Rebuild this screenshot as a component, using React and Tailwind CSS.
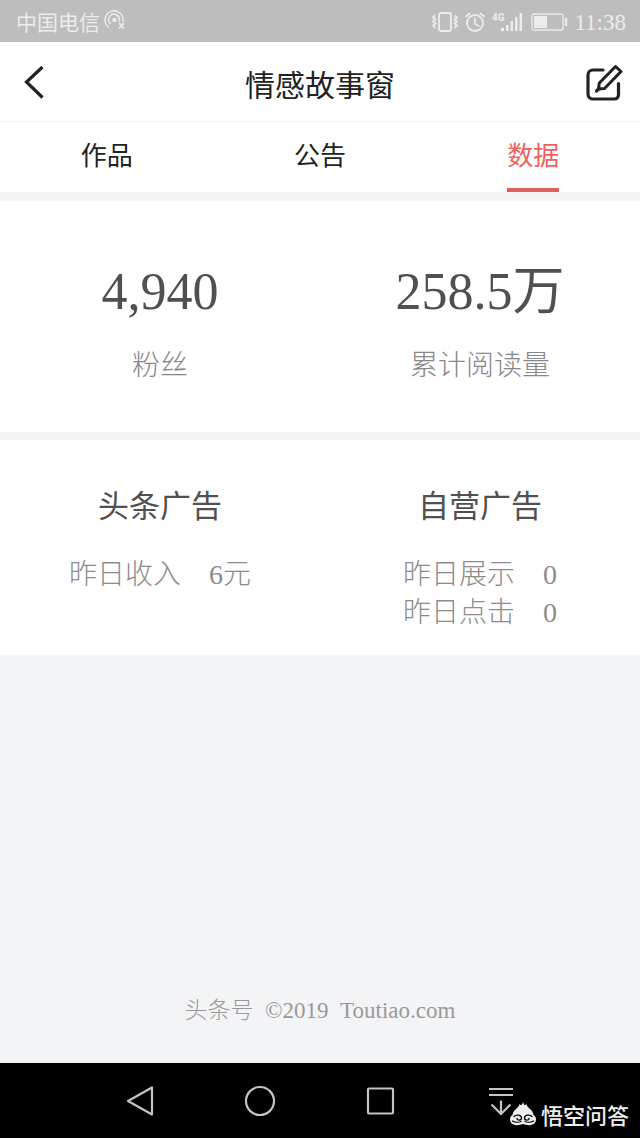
import React, { useState } from 'react';

const tabs = ['作品', '公告', '数据'];

const stats = [
  { value: '4,940', label: '粉丝' },
  { value: '258.5万', label: '累计阅读量' },
];

const ads = [
  { title: '头条广告', rows: [{ label: '昨日收入', value: '6元' }] },
  {
    title: '自营广告',
    rows: [
      { label: '昨日展示', value: '0' },
      { label: '昨日点击', value: '0' },
    ],
  },
];

const StatusBar = () => (
  <div className="flex h-[42px] items-center justify-between bg-[#bdbdbd] pt-[2px] pr-[14px] pl-4 text-[#ececec]">
    <div className="flex items-center gap-1">
      <span className="pt-[2px] text-[21px] leading-6">中国电信</span>
      {/* Hotspot */}
      <svg className="-mt-1 h-5 w-[22px]" viewBox="0 0 22 20" fill="none" stroke="currentColor" strokeWidth="1.5" strokeLinecap="round">
        <path d="M4.500 17A9 9 0 1 1 19 11M6.500 13.500a5.300 5.300 0 1 1 8.600-2.500" />
        <circle cx="10.500" cy="10" r="2.200" fill="currentColor" stroke="none" />
        <path d="m15.500 13.500 4 4.500m0-4.500-4 4.500" strokeWidth="1.800" />
      </svg>
    </div>
    <div className="flex items-center">
      {/* Vibrate */}
      <svg className="h-5 w-[26px]" viewBox="0 0 26 20" fill="none" stroke="currentColor" strokeWidth="1.800">
        <rect x="7" y="1" width="12" height="18" rx="2" />
        <path d="m3 3.500-2 2 2.500 2-2.500 2 2.500 2-2.500 2 2.500 2.500M23 3.500l2 2-2.500 2 2.500 2-2.500 2 2.500 2-2.500 2.500" />
      </svg>
      {/* Alarm */}
      <svg className="ml-[7px] h-5 w-5" viewBox="0 0 20 20" fill="none" stroke="currentColor" strokeWidth="1.800" strokeLinecap="round">
        <circle cx="10" cy="11" r="8" />
        <path d="M10 6.500v5l3.500 2.500M1 4.500 4.500 1.500M19 4.500 15.500 1.500" />
      </svg>
      <div className="ml-[7px] flex items-end">
        <span className="mb-[9px] font-['Roboto',sans-serif] text-[10px] leading-[11px] font-bold">4G</span>
        <svg className="-ml-[3px] h-5 w-[22px]" viewBox="0 0 22 20" fill="currentColor">
          <path d="M0 16h3v3H0zM5 13h2.500v6H5zM9.500 9H12v10H9.500zM14 5h2.500v14H14zM18.500 1H21v18h-2.500z" />
        </svg>
      </div>
      {/* Battery */}
      <svg className="ml-[8px] h-[18px] w-[37px]" viewBox="0 0 37 18" fill="none" stroke="currentColor">
        <rect x="1" y="1" width="31" height="16" rx="2" strokeWidth="1.300" />
        <path d="M3 3h13v12H3z" fill="currentColor" stroke="none" />
        <path d="M35 5v8" strokeWidth="2.500" />
      </svg>
      <span className="ml-[6px] pt-[2px] text-[23px] leading-6">11:38</span>
    </div>
  </div>
);

const Header = () => (
  <header className="flex h-20 items-center justify-between border-b border-[#f1f2f3] px-[17px] text-[#222]">
    <button type="button" aria-label="返回" className="flex w-10 pl-[7px]">
      <svg className="h-[34px] w-5" viewBox="0 0 20 34" fill="none" stroke="currentColor" strokeWidth="3.200">
        <path d="M18.500 2 2.500 17l16 15.500" />
      </svg>
    </button>
    <h1 className="pt-2 text-[30px] leading-9">情感故事窗</h1>
    <button type="button" aria-label="编辑" className="flex w-10 justify-end">
      <svg className="h-[38px] w-[37px]" viewBox="0 0 37 38" fill="none" stroke="currentColor" strokeWidth="3.200" strokeLinecap="round" strokeLinejoin="round">
        <path d="M17 7H7a5 5 0 0 0-5 5v19a5 5 0 0 0 5 5h21.500a4 4 0 0 0 4-4V20.500" />
        <path d="M29.500 3.500 35 8.500 18.500 25.500l-6 .5.800-6z" strokeWidth="3" />
        <path d="m13 25.500-2.500 2.500" />
      </svg>
    </button>
  </header>
);

const NavBar = () => (
  <nav className="relative flex h-[75px] items-center justify-between bg-black px-[19%] text-[#c4c4c4]">
    <button type="button" aria-label="后退">
      <svg className="h-9 w-9" viewBox="0 0 36 36" fill="none" stroke="currentColor" strokeWidth="2.200" strokeLinejoin="round">
        <path d="M30 4.500v27L6 18z" />
      </svg>
    </button>
    <button type="button" aria-label="主页">
      <svg className="h-9 w-9" viewBox="0 0 36 36" fill="none" stroke="currentColor" strokeWidth="2.200">
        <circle cx="18" cy="18" r="14" />
      </svg>
    </button>
    <button type="button" aria-label="最近任务">
      <svg className="h-9 w-9" viewBox="0 0 36 36" fill="none" stroke="currentColor" strokeWidth="2.200">
        <rect x="6" y="5.500" width="25" height="25" rx="1" />
      </svg>
    </button>
    <button type="button" aria-label="通知栏">
      <svg className="h-9 w-9" viewBox="0 0 36 36" fill="none" stroke="currentColor" strokeWidth="2.200">
        <path d="M7 6h24M7 12h24M19 17.500V31M9.500 21.500 19 31l9.500-9.500" />
      </svg>
    </button>

    <div className="absolute right-[11px] bottom-3 flex items-center gap-[5px] text-[#eee]">
      <svg className="h-6 w-[26px]" viewBox="0 0 26 24">
        <path
          fill="currentColor"
          d="M13 0c.3 1.500 1 2.500 2 3.300l1.500-1.300c.3 2 1.500 3 3 4.500 2.300 2 3.800 3.800 4 6.500 1.600.8 2.500 2.500 2.500 4.500 0 3-2 5-5 5.500-2.500.5-5 0-8-1-3 1-5.500 1.500-8 1-3-.5-5-2.500-5-5.500 0-2 .9-3.700 2.500-4.500.2-2.700 1.700-4.500 4-6.500 1.500-1.500 2.700-2.500 3-4.500L11 3.300c1-.8 1.700-1.800 2-3.300z"
        />
        <path
          d="M4 14.500c2.500-2.500 7.500-1.500 7.500 1.500 0 2.800-4.500 2.800-4.500.5M22 14.500c-2.500-2.500-7.500-1.500-7.500 1.500 0 2.800 4.500 2.800 4.500.5M2.500 19c2.500 1.500 6.500 1.500 8.500.5M23.500 19c-2.500 1.500-6.500 1.500-8.500.5"
          fill="none"
          stroke="#000"
          strokeWidth="1.300"
          strokeLinecap="round"
        />
      </svg>
      <span className="font-['Noto_Sans_CJK_SC',sans-serif] text-[22px] leading-6 font-medium">悟空问答</span>
    </div>
  </nav>
);

const App = () => {
  const [active, setActive] = useState('数据');

  return (
    <div className="flex min-h-screen flex-col bg-[#f3f4f6] font-['Liberation_Serif','Noto_Sans_CJK_SC',serif]">
      <StatusBar />

      <div className="bg-white">
        <Header />
        <div className="grid h-[70px] grid-cols-3" role="tablist">
          {tabs.map((tab) => (
            <button
              key={tab}
              type="button"
              role="tab"
              aria-selected={active === tab}
              onClick={() => setActive(tab)}
              className={`justify-self-center border-b-4 pt-1 text-[26px] leading-8 ${
                active === tab ? 'border-[#e0605e] text-[#f0605e]' : 'border-transparent text-[#222]'
              }`}
            >
              {tab}
            </button>
          ))}
        </div>
      </div>

      <section className="mt-[9px] grid grid-cols-2 bg-white pt-[67px] pb-[52px] text-center">
        {stats.map((item) => (
          <div key={item.label}>
            <p className="text-[52px] leading-[48px] text-[#505050]">{item.value}</p>
            <p className="mt-9 text-[28px] leading-7 font-light text-[#888]">{item.label}</p>
          </div>
        ))}
      </section>

      <section className="mt-2 grid grid-cols-2 bg-white pt-[51px] pb-[23px] text-center">
        {ads.map((ad) => (
          <div key={ad.title}>
            <h2 className="text-[31px] leading-8 text-[#505050]">{ad.title}</h2>
            <dl className="mt-[33px] text-[28px] leading-[38px] font-light text-[#8c8c8c]">
              {ad.rows.map((row) => (
                <div key={row.label} className="flex justify-center gap-7">
                  <dt>{row.label}</dt>
                  <dd>{row.value}</dd>
                </div>
              ))}
            </dl>
          </div>
        ))}
      </section>

      <footer className="mt-auto pb-10 text-center text-[23px] leading-6 font-light text-[#999]">
        头条号&nbsp; ©2019&nbsp; Toutiao.com
      </footer>

      <NavBar />
    </div>
  );
};

export default App;
